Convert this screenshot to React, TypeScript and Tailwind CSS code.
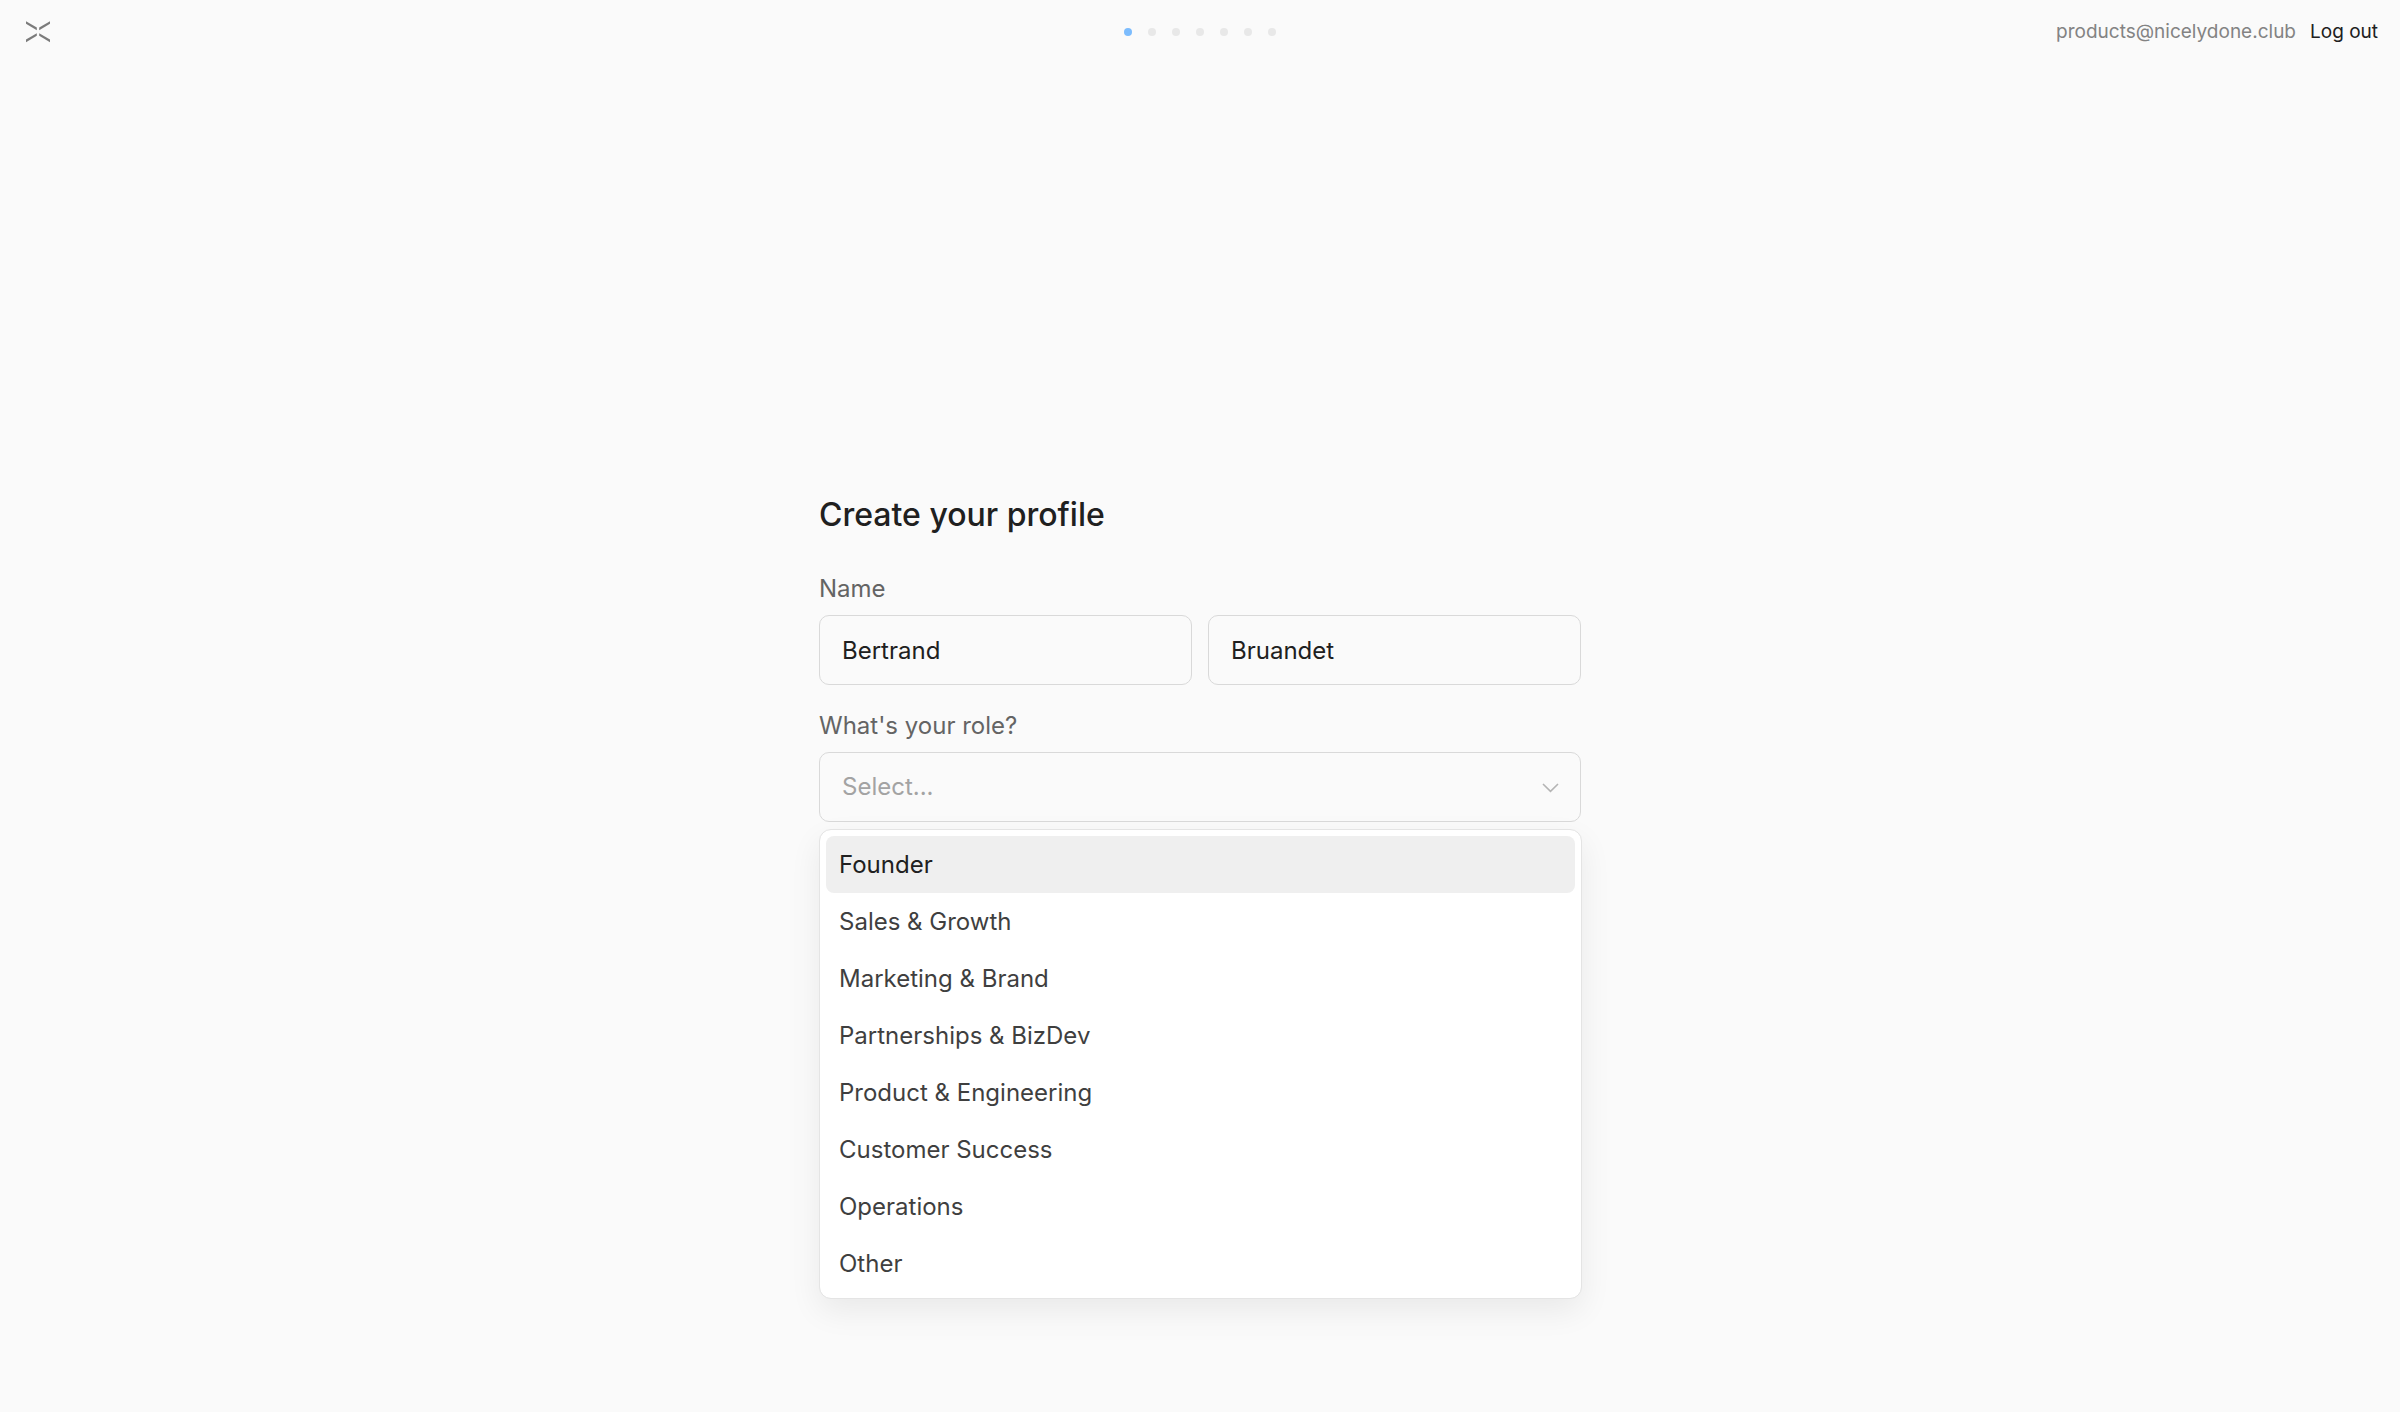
import React, { useState } from 'react';

const STEP_COUNT = 7;

const roles = [
  'Founder',
  'Sales & Growth',
  'Marketing & Brand',
  'Partnerships & BizDev',
  'Product & Engineering',
  'Customer Success',
  'Operations',
  'Other',
];

const Logo: React.FC = () => (
  <svg width="24" height="22" viewBox="0 0 24 22" fill="#7b7b7b" aria-hidden="true">
    <path d="M0 0.2 L10.8 6.6 V9.2 L0 2.8 Z" />
    <path d="M24 0.2 L13.2 6.6 V9.2 L24 2.8 Z" />
    <path d="M0 21.2 L10.8 14.8 V12.2 L0 18.6 Z" />
    <path d="M24 21.2 L13.2 14.8 V12.2 L24 18.6 Z" />
  </svg>
);

const Header: React.FC<{ step: number }> = ({ step }) => (
  <header className="grid grid-cols-3 items-center h-16 px-[22px] text-[19px] leading-6">
    <a href="#" aria-label="Home" className="justify-self-start px-1">
      <Logo />
    </a>
    <ol className="flex justify-center gap-4" aria-label="Progress">
      {Array.from({ length: STEP_COUNT }, (_, i) => (
        <li
          key={i}
          className={`w-2 h-2 rounded-full ${i === step ? 'bg-[#7cbcfd]' : 'bg-[#e8e8e8]'}`}
        />
      ))}
    </ol>
    <div className="flex justify-end gap-3.5">
      <span className="text-[#838383]">products@nicelydone.club</span>
      <button type="button" className="text-[#202020]">
        Log out
      </button>
    </div>
  </header>
);

const fieldClass =
  'block w-full h-[70px] px-[22px] rounded-[10px] border border-[#d9d9d9] bg-transparent outline-none';

const App: React.FC = () => {
  const [firstName, setFirstName] = useState('Bertrand');
  const [lastName, setLastName] = useState('Bruandet');
  const [role, setRole] = useState('');
  const [isOpen, setIsOpen] = useState(true);
  const [activeIndex, setActiveIndex] = useState(0);

  const handleSelect = (value: string) => {
    setRole(value);
    setIsOpen(false);
  };

  return (
    <div className="min-h-screen bg-[#fafafa] font-['Inter',sans-serif] text-[#202020]">
      <Header step={0} />

      <main className="w-full max-w-[762px] mx-auto pt-[430px] text-[24px] leading-8">
        <h1 className="text-[32px] leading-[42px] font-medium">Create your profile</h1>

        <form className="mt-[37px]" onSubmit={(e) => e.preventDefault()}>
          {/* Name */}
          <label htmlFor="first-name" className="block text-[#646464]">
            Name
          </label>
          <div className="grid grid-cols-2 gap-4 mt-2.5">
            <input
              id="first-name"
              type="text"
              value={firstName}
              onChange={(e) => setFirstName(e.target.value)}
              className={fieldClass}
            />
            <input
              type="text"
              aria-label="Last name"
              value={lastName}
              onChange={(e) => setLastName(e.target.value)}
              className={fieldClass}
            />
          </div>

          {/* Role */}
          <label htmlFor="role" className="block mt-[25px] text-[#646464]">
            What's your role?
          </label>
          <div className="relative mt-2.5">
            <select
              id="role"
              value={role}
              onChange={(e) => setRole(e.target.value)}
              onMouseDown={(e) => {
                e.preventDefault();
                setIsOpen(!isOpen);
              }}
              className={`${fieldClass} appearance-none ${role ? '' : 'text-[#a3a3a3]'}`}
            >
              <option value="">Select...</option>
              {roles.map((item) => (
                <option key={item} value={item}>
                  {item}
                </option>
              ))}
            </select>
            <svg
              className="absolute right-[22px] top-[31px] pointer-events-none"
              width="17"
              height="10"
              viewBox="0 0 17 10"
              fill="none"
              stroke="#b4b4b4"
              strokeWidth="1.6"
            >
              <path d="M1 1L8.5 8.3L16 1" />
            </svg>

            {isOpen && (
              <ul
                role="listbox"
                aria-label="Role"
                className="absolute left-0 -right-px top-full mt-[7px] p-1.5 rounded-xl border border-[#e4e4e4] bg-white bg-clip-padding shadow-[0_12px_32px_rgba(0,0,0,0.07)]"
              >
                {roles.map((item, i) => (
                  <li
                    key={item}
                    role="option"
                    aria-selected={item === role}
                    onMouseEnter={() => setActiveIndex(i)}
                    onClick={() => handleSelect(item)}
                    className={`flex items-center h-[57px] px-[13px] rounded-lg cursor-pointer ${
                      i === activeIndex ? 'bg-[#efefef] text-[#202020]' : 'text-[#3f3f3f]'
                    }`}
                  >
                    {item}
                  </li>
                ))}
              </ul>
            )}
          </div>
        </form>
      </main>
    </div>
  );
};

export default App;
